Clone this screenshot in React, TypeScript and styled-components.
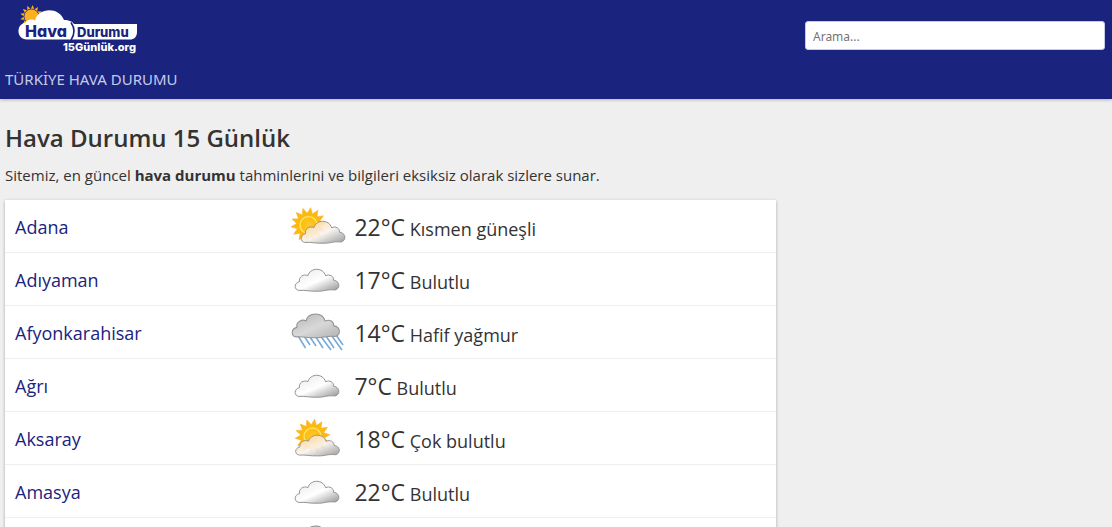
import React, { useId } from "react";
import styled, { createGlobalStyle } from "styled-components";

const GlobalStyle = createGlobalStyle`
  *, *::before, *::after { box-sizing: border-box; }
  body {
    margin: 0;
    background: #efefef;
    color: #333;
    font-family: "Open Sans", "Noto Sans", sans-serif;
    font-size: 15px;
    line-height: 24px;
  }
`;

const Page = styled.div`
  height: 100vh;
  overflow: hidden;
`;

const Header = styled.header`
  background: #1a237e;
  padding: 0 7px 0 5px;
  box-shadow: 0 1px 3px rgba(0, 0, 0, 0.25);
`;

const TopBar = styled.div`
  display: flex;
  align-items: flex-start;
  justify-content: space-between;
  height: 60px;
`;

const LogoLink = styled.a`
  display: block;
  margin: 2px 0 0 10px;
  line-height: 0;
`;

const LogoText = styled.g`
  font-family: Inter, sans-serif;
  font-weight: 800;
  font-feature-settings: "cv11";
`;

const SearchInput = styled.input`
  width: 300px;
  height: 29px;
  margin-top: 21px;
  padding: 2px 7px 0;
  border: 1px solid #c5cae9;
  border-radius: 3px;
  background: #fff;
  color: #333;
  font-family: "Noto Sans", sans-serif;
  font-size: 12px;
  &::placeholder { color: #757575; opacity: 1; }
`;

const Nav = styled.nav`
  display: flex;
  padding: 7px 0 8px;
`;

const NavLink = styled.a`
  color: #c5cae9;
  font-family: "Noto Sans", sans-serif;
  font-size: 15px;
  text-decoration: none;
`;

const Content = styled.div`
  padding: 22px 5px 0;
`;

const Main = styled.main`
  width: 70%;
`;

const Title = styled.h1`
  margin: 0;
  font-size: 24px;
  font-weight: 600;
  line-height: 34px;
`;

const Intro = styled.p`
  margin: 8px 0 13px;
`;

const Table = styled.table`
  width: 100%;
  table-layout: fixed;
  border-collapse: separate;
  border-spacing: 0;
  background: #fff;
  box-shadow: 0 1px 3px rgba(0, 0, 0, 0.3);
`;

const Row = styled.tr`
  height: 53px;
  & > * { border-bottom: 1px solid #eee; }
`;

const CityCell = styled.th`
  width: 37%;
  padding: 3px 10px 0;
  text-align: left;
  font-weight: 400;
`;

const CityLink = styled.a`
  color: #1a237e;
  font-size: 18px;
  text-decoration: none;
`;

const IconCell = styled.td`
  width: 64px;
  padding: 0;
  line-height: 0;
`;

const ForecastCell = styled.td`
  padding: 3px 0 0;
  font-size: 18px;
`;

const Degree = styled.span`
  font-size: 23px;
`;

type Kind = "partly" | "cloudy" | "rain" | "mostly";

const CLOUD =
  "M17 38.4C12 38 11.600 31 17.500 29.600C16.500 25 21.500 21.500 26 23.600C28 15.500 41 14.800 43.600 23.800C47.500 21.600 52 24.400 51.600 28.200C58 28.800 58.600 36.800 53 38C45 37 42 39.600 35 39.200C28 39.600 23 37.800 17 38.400Z";

const rays = (cx: number, cy: number, outer: number, inner: number, n: number) =>
  Array.from({ length: n * 2 }, (_, i) => {
    const r = i % 2 ? inner : outer;
    const a = (Math.PI * i) / n - Math.PI / 2 + 0.12;
    return `${(cx + r * Math.cos(a)).toFixed(2)},${(cy + r * Math.sin(a)).toFixed(2)}`;
  }).join(" ");

const cloudPlace: Record<Kind, string> = {
  partly: "",
  cloudy: "translate(-6 -5)",
  rain: "translate(-10 -14.600) scale(1.080)",
  mostly: "translate(-5.500 3) scale(1 0.940)",
};

const labels: Record<Kind, string> = {
  partly: "Kısmen güneşli",
  cloudy: "Bulutlu",
  rain: "Hafif yağmur",
  mostly: "Çok bulutlu",
};

function WeatherIcon({ kind }: { kind: Kind }) {
  const id = useId();
  const sunny = kind === "partly" || kind === "mostly";
  const rain = kind === "rain";
  const cx = kind === "partly" ? 20.5 : 24.5;
  const cy = kind === "partly" ? 21 : 20.5;
  return (
    <svg width="56" height="44" viewBox="2 0 56 44" aria-hidden="true">
      <defs>
        <linearGradient id={`${id}c`} x1="0.1" y1="0.1" x2="0.9" y2="1">
          <stop offset="0" stopColor={rain ? "#bcbcbc" : sunny ? "#ffd6a0" : "#ececec"} />
          <stop offset="0.5" stopColor={rain ? "#d8d8d8" : sunny ? "#f8f4f0" : "#ffffff"} />
          <stop offset="1" stopColor={rain ? "#b4b4b4" : "#9c9c9c"} />
        </linearGradient>
        <radialGradient id={`${id}s`}>
          <stop offset="0" stopColor="#ffc928" />
          <stop offset="1" stopColor="#ffb90a" />
        </radialGradient>
      </defs>
      {sunny && (
        <g>
          <polygon points={rays(cx, cy, 17.5, 11.8, 14)} fill="#fdb90f" stroke="#f8a81c" strokeWidth="0.5" />
          <circle cx={cx} cy={cy} r="10" fill={`url(#${id}s)`} />
          <circle cx={cx} cy={cy} r="8.500" fill="none" stroke="#ffe45c" strokeWidth="1.500" />
        </g>
      )}
      {rain && (
        <path
          d="M9 24L17.500 38M14 23L22 35M20 24L28 36M26 24L35 38M31 24L43 40M36 23L46 38M41 22L54 40M46 22L55 35"
          stroke="#78abd8"
          strokeWidth="1.600"
        />
      )}
      <g transform={cloudPlace[kind]}>
        <path d={CLOUD} fill={`url(#${id}c)`} fillOpacity={sunny ? 0.93 : 1} stroke="#949494" strokeWidth="1" />
      </g>
    </svg>
  );
}

function Logo() {
  return (
    <svg width="124" height="52" viewBox="15 2 124 52" role="img" aria-label="Hava Durumu 15 Günlük.org">
      <polygon points={rays(31.5, 16.5, 11.5, 7.5, 13)} fill="#fbb022" />
      <circle cx="31.500" cy="16.500" r="7.500" fill="#fbb022" stroke="#1a237e" strokeWidth="0.800" />
      <path
        d="M27 39.500C16 39.500 16 24 25 23C26 20 32 18.500 35 20.500C38 7.500 59 6.500 64 20C69 20 73 22 74 24H137V32C137 37 134 39.500 130 39.500Z"
        fill="#fff"
      />
      <path d="M71 22.500Q77 31 71 40" fill="none" stroke="#1a237e" strokeWidth="1.600" />
      <LogoText>
        <text x="25" y="37" fontSize="16" fill="#1a237e">Hava</text>
        <text x="77" y="37" fontSize="13" fill="#1a237e">Durumu</text>
        <text x="63" y="51" fontSize="11" fill="#fff" stroke="#1a237e" strokeWidth="2" paintOrder="stroke">15Günlük.org</text>
      </LogoText>
    </svg>
  );
}

const cities: { name: string; degree: number; kind: Kind }[] = [
  { name: "Adana", degree: 22, kind: "partly" },
  { name: "Adıyaman", degree: 17, kind: "cloudy" },
  { name: "Afyonkarahisar", degree: 14, kind: "rain" },
  { name: "Ağrı", degree: 7, kind: "cloudy" },
  { name: "Aksaray", degree: 18, kind: "mostly" },
  { name: "Amasya", degree: 22, kind: "cloudy" },
  { name: "Ankara", degree: 16, kind: "rain" },
];

export default function App() {
  return (
    <Page>
      <GlobalStyle />
      <Header>
        <TopBar>
          <LogoLink href="#"><Logo /></LogoLink>
          <SearchInput type="search" placeholder="Arama..." aria-label="Arama" />
        </TopBar>
        <Nav>
          <NavLink href="#">TÜRKİYE HAVA DURUMU</NavLink>
        </Nav>
      </Header>
      <Content>
        <Main>
          <Title>Hava Durumu 15 Günlük</Title>
          <Intro>
            Sitemiz, en güncel <strong>hava durumu</strong> tahminlerini ve bilgileri eksiksiz olarak sizlere sunar.
          </Intro>
          <Table>
            <tbody>
              {cities.map((city) => (
                <Row key={city.name}>
                  <CityCell scope="row"><CityLink href="#">{city.name}</CityLink></CityCell>
                  <IconCell><WeatherIcon kind={city.kind} /></IconCell>
                  <ForecastCell>
                    <Degree>{city.degree}°C</Degree> {labels[city.kind]}
                  </ForecastCell>
                </Row>
              ))}
            </tbody>
          </Table>
        </Main>
      </Content>
    </Page>
  );
}
